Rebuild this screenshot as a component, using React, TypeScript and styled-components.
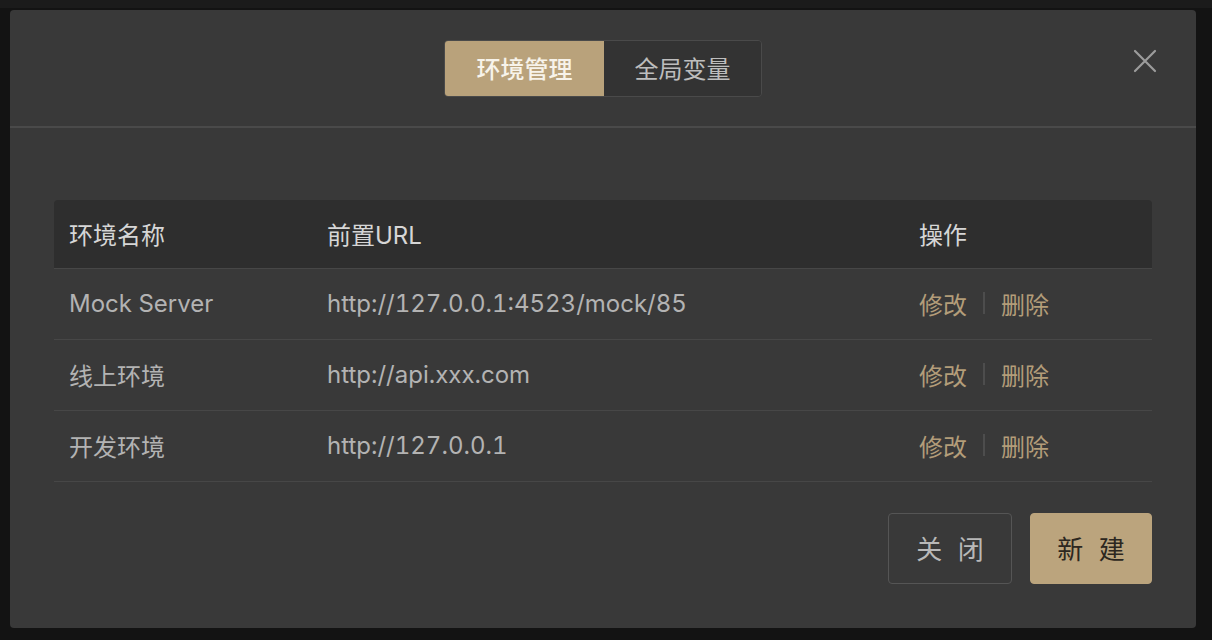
import styled, { createGlobalStyle } from "styled-components";

const GlobalStyle = createGlobalStyle`
  body {
    margin: 0;
    background: linear-gradient(#1b1b1b 0, #1b1b1b 8px, #131313 8px);
    font-family: "Inter", "Noto Sans CJK SC", sans-serif;
  }
`;

const Page = styled.div`
  width: 1212px;
  height: 640px;
  padding: 10px;
  box-sizing: border-box;
`;

const Modal = styled.div`
  width: 1186px;
  height: 618px;
  background: #393939;
  border-radius: 4px;
  display: flex;
  flex-direction: column;
`;

const Header = styled.header`
  position: relative;
  height: 118px;
  border-bottom: 2px solid #4a4a4a;
  display: flex;
  justify-content: center;
  align-items: flex-start;
  padding-top: 30px;
  box-sizing: border-box;
`;

const Tabs = styled.div`
  display: flex;
  border: 1px solid #4a4a4a;
  border-radius: 4px;
  overflow: hidden;
`;

const Tab = styled.button<{ $active?: boolean }>`
  width: ${(p) => (p.$active ? "159px" : "157px")};
  height: 55px;
  border: none;
  margin: 0;
  padding: 0 0 2px;
  font-family: inherit;
  font-size: 24px;
  font-weight: ${(p) => (p.$active ? 500 : 400)};
  background: ${(p) => (p.$active ? "#b9a27b" : "#333333")};
  color: ${(p) => (p.$active ? "#f7f3ea" : "#bdbdbd")};
  cursor: pointer;
`;

const CloseButton = styled.button`
  position: absolute;
  right: 38px;
  top: 38px;
  width: 26px;
  height: 26px;
  padding: 0;
  border: none;
  background: none;
  cursor: pointer;
`;

const Body = styled.div`
  flex: 1;
  padding: 72px 44px 0;
  display: flex;
  flex-direction: column;
`;

const Table = styled.div`
  display: flex;
  flex-direction: column;
`;

const Row = styled.div<{ $head?: boolean }>`
  display: grid;
  grid-template-columns: 258px 592px 1fr;
  align-items: center;
  height: ${(p) => (p.$head ? "68px" : "70px")};
  background: ${(p) => (p.$head ? "#2e2e2e" : "transparent")};
  border-radius: ${(p) => (p.$head ? "4px 4px 0 0" : "0")};
  border-bottom: 1px solid #474747;
  color: ${(p) => (p.$head ? "#d6d6d6" : "#b3b3b3")};
  font-size: 24px;
  font-feature-settings: "tnum";
`;

const Cell = styled.div`
  padding-left: 15px;
  padding-bottom: 2px;
  white-space: nowrap;
`;

const Actions = styled.div`
  padding-left: 15px;
  padding-bottom: 2px;
  display: flex;
  align-items: center;
  gap: 16px;
`;

const LinkText = styled.a`
  color: #b39d79;
  cursor: pointer;
`;

const Divider = styled.span`
  width: 2px;
  height: 22px;
  background: #4d4d4d;
`;

const Footer = styled.div`
  display: flex;
  justify-content: flex-end;
  gap: 18px;
  margin-top: 31px;
`;

const Button = styled.button<{ $primary?: boolean }>`
  width: ${(p) => (p.$primary ? "122px" : "124px")};
  height: 71px;
  border-radius: 4px;
  border: 1px solid ${(p) => (p.$primary ? "#bba47d" : "#555555")};
  background: ${(p) => (p.$primary ? "#bba47d" : "transparent")};
  color: ${(p) => (p.$primary ? "#2c2720" : "#b8b8b8")};
  font-family: inherit;
  font-size: 26px;
  letter-spacing: 4px;
  padding: 0 0 2px 4px;
  cursor: pointer;
`;

const envs = [
  { name: "Mock Server", url: "http://127.0.0.1:4523/mock/85" },
  { name: "线上环境", url: "http://api.xxx.com" },
  { name: "开发环境", url: "http://127.0.0.1" },
];

export default function App() {
  return (
    <>
      <GlobalStyle />
      <Page>
        <Modal>
          <Header>
            <Tabs>
              <Tab $active>环境管理</Tab>
              <Tab>全局变量</Tab>
            </Tabs>
            <CloseButton aria-label="关闭">
              <svg width="26" height="26" viewBox="0 0 26 26">
                <path d="M3 3 L23 23 M23 3 L3 23" stroke="#9c9c9c" strokeWidth="2.2" strokeLinecap="round" />
              </svg>
            </CloseButton>
          </Header>
          <Body>
            <Table>
              <Row $head>
                <Cell>环境名称</Cell>
                <Cell>前置URL</Cell>
                <Cell>操作</Cell>
              </Row>
              {envs.map((env) => (
                <Row key={env.name}>
                  <Cell>{env.name}</Cell>
                  <Cell>{env.url}</Cell>
                  <Actions>
                    <LinkText>修改</LinkText>
                    <Divider />
                    <LinkText>删除</LinkText>
                  </Actions>
                </Row>
              ))}
            </Table>
            <Footer>
              <Button>关 闭</Button>
              <Button $primary>新 建</Button>
            </Footer>
          </Body>
        </Modal>
      </Page>
    </>
  );
}
